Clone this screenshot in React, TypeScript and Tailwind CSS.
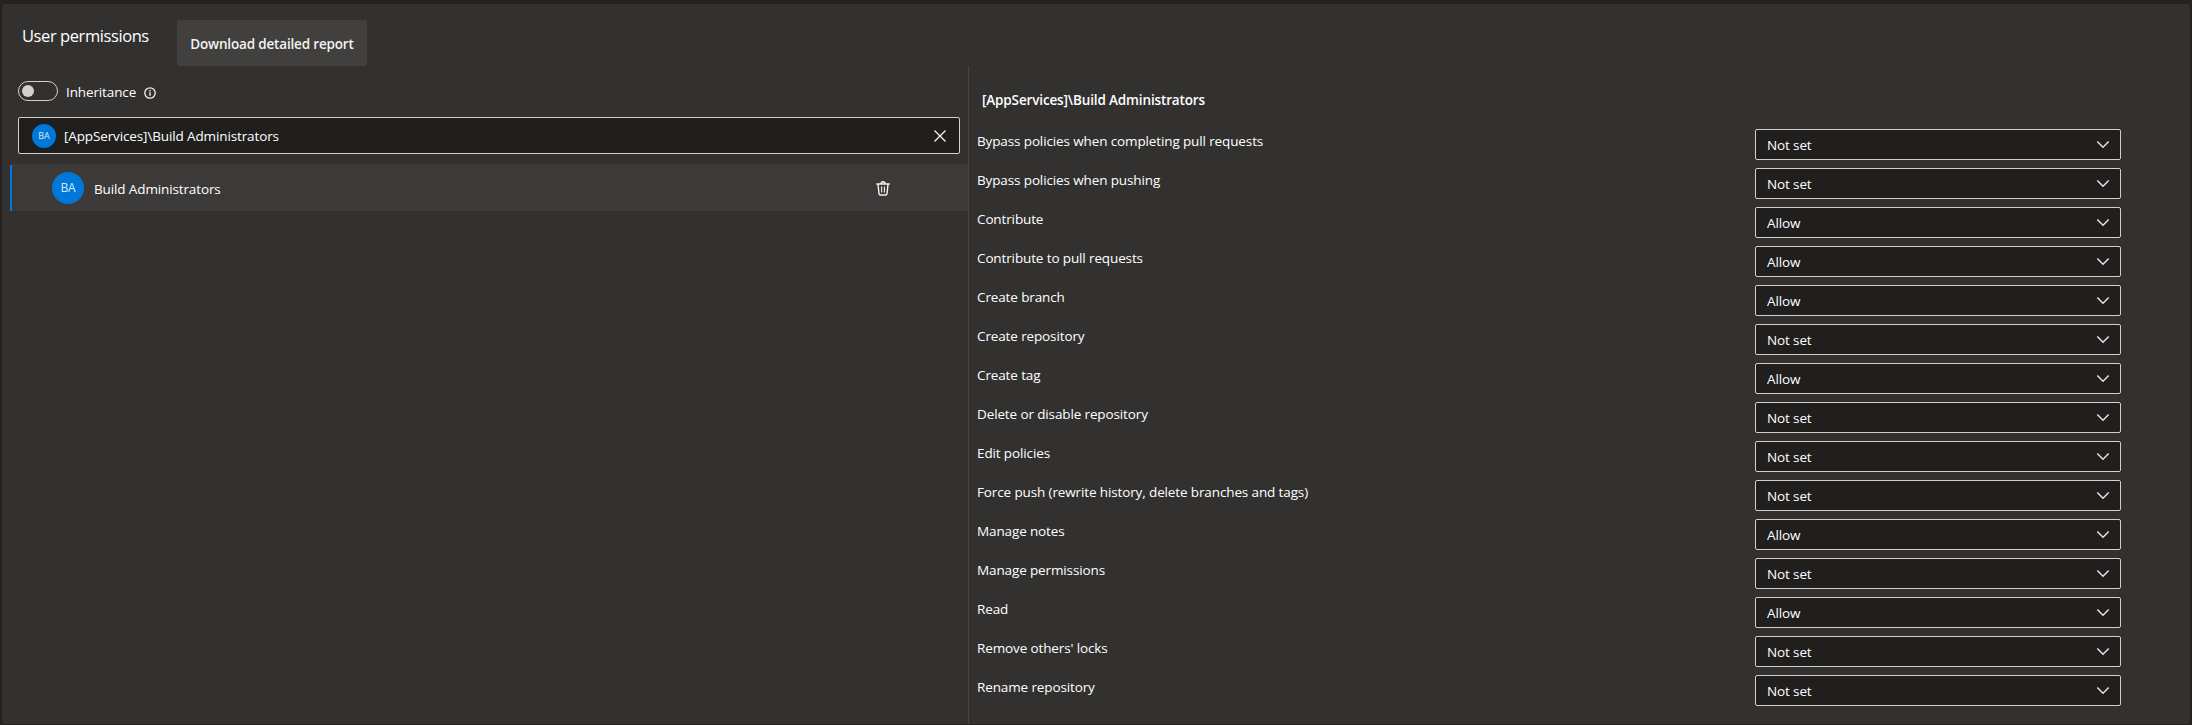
type Permission = { label: string; value: "Allow" | "Not set" };

const permissions: Permission[] = [
  { label: "Bypass policies when completing pull requests", value: "Not set" },
  { label: "Bypass policies when pushing", value: "Not set" },
  { label: "Contribute", value: "Allow" },
  { label: "Contribute to pull requests", value: "Allow" },
  { label: "Create branch", value: "Allow" },
  { label: "Create repository", value: "Not set" },
  { label: "Create tag", value: "Allow" },
  { label: "Delete or disable repository", value: "Not set" },
  { label: "Edit policies", value: "Not set" },
  { label: "Force push (rewrite history, delete branches and tags)", value: "Not set" },
  { label: "Manage notes", value: "Allow" },
  { label: "Manage permissions", value: "Not set" },
  { label: "Read", value: "Allow" },
  { label: "Remove others' locks", value: "Not set" },
  { label: "Rename repository", value: "Not set" },
];

function ChevronIcon() {
  return (
    <svg className="h-[9px] w-[14px]" viewBox="0 0 14 9" fill="none" stroke="#e6e4e2" strokeWidth="1.5">
      <path d="M1.3 1.5 7 7.2l5.7-5.7" />
    </svg>
  );
}

function InfoIcon() {
  return (
    <svg className="h-3 w-3" viewBox="0 0 12 12" fill="none" stroke="#f3f2f1">
      <circle cx="6" cy="6" r="5.2" strokeWidth="1.3" />
      <path d="M6 5.2v3.6M6 3.1v1.3" strokeWidth="1.4" />
    </svg>
  );
}

function CloseIcon() {
  return (
    <svg className="h-3 w-3" viewBox="0 0 12 12" fill="none" stroke="#f3f2f1" strokeWidth="1.3">
      <path d="M.5.5l11 11M11.5.5l-11 11" />
    </svg>
  );
}

function TrashIcon() {
  return (
    <svg className="h-[15px] w-[14px]" viewBox="0 0 14 15" fill="none" stroke="#f3f2f1" strokeWidth="1.4">
      <path d="M.3 3h13.4M4.9 3c0-3 4.2-3 4.2 0M2 3.2l1 9.4c.1.9.6 1.4 1.4 1.4h5.2c.8 0 1.3-.5 1.4-1.4l1-9.4" />
      <path d="M5.6 5.4v6M8.4 5.4v6" strokeWidth="1.1" />
    </svg>
  );
}

function PermissionRow({ label, value }: Permission) {
  return (
    <div className="flex h-[31px] w-[1144px] items-center justify-between">
      <span className="-mt-[7px]">{label}</span>
      <button className="flex h-[31px] w-[366px] items-center justify-between rounded-xs border border-[#d2d0ce] bg-[#201f1e] pr-[10px] pl-[11px] text-left">
        <span className="mt-px">{value}</span>
        <ChevronIcon />
      </button>
    </div>
  );
}

export default function App() {
  return (
    <div className="h-[725px] w-[2192px] overflow-hidden bg-[#242322] pt-1 pr-0.5 pl-0.5 font-['Open_Sans',sans-serif] text-[13.5px] leading-5 tracking-[-0.125px] whitespace-nowrap text-white">
      <main className="flex h-[720px] flex-col rounded bg-[#323130]">
        <header className="flex h-[62px] items-start gap-[28px] pt-4 pl-5">
          <h1 className="mt-1 w-[127px] text-[16.5px] leading-6 tracking-[-0.42px]">User permissions</h1>
          <button className="flex h-[46px] w-[190px] items-center justify-center rounded-xs bg-[#41403e] pt-0.5 font-semibold tracking-[-0.17px] text-[#f3f2f1]">
            Download detailed report
          </button>
        </header>
        <div className="flex min-h-0 flex-1">
          <section className="flex w-[966px] flex-col">
            <div className="mt-[15px] flex h-5 items-center pl-4">
              <button className="flex h-5 w-10 items-center rounded-full border border-[#d2d0ce] pl-[3px]">
                <span className="h-3 w-3 rounded-full bg-[#d2d0ce]" />
              </button>
              <span className="mt-[2px] ml-2 w-[78px]">Inheritance</span>
              <span className="mt-[4px]">
                <InfoIcon />
              </span>
            </div>
            <div className="mt-4 ml-4 flex h-[37px] w-[942px] items-center rounded-xs border border-[#d2d0ce] bg-[#201f1e] pr-[13px] pl-[13px]">
              <span className="flex h-6 w-6 items-center justify-center rounded-full bg-[#0078da] text-[9px] text-[#d7ebf9]">BA</span>
              <span className="mt-px ml-2 flex-1">[AppServices]\Build Administrators</span>
              <CloseIcon />
            </div>
            <div className="mt-[10px] ml-2 flex h-[47px] w-[958px] items-center bg-[#3b3a39]">
              <span className="mt-px h-[46px] w-[2px] bg-[#0078da]" />
              <span className="ml-10 flex h-8 w-8 items-center justify-center rounded-full bg-[#0078da] text-xs text-[#d7ebf9]">BA</span>
              <span className="mt-[3px] ml-[10px] w-[782px]">Build Administrators</span>
              <span className="mt-px">
                <TrashIcon />
              </span>
            </div>
          </section>
          <section className="flex-1 border-l border-[#484644] pt-[24px] pl-2">
            <h2 className="pl-[5px] font-semibold tracking-[-0.14px]">[AppServices]\Build Administrators</h2>
            <div className="mt-[19px] flex flex-col gap-2">
              {permissions.map((permission) => (
                <PermissionRow key={permission.label} {...permission} />
              ))}
            </div>
          </section>
        </div>
      </main>
    </div>
  );
}
